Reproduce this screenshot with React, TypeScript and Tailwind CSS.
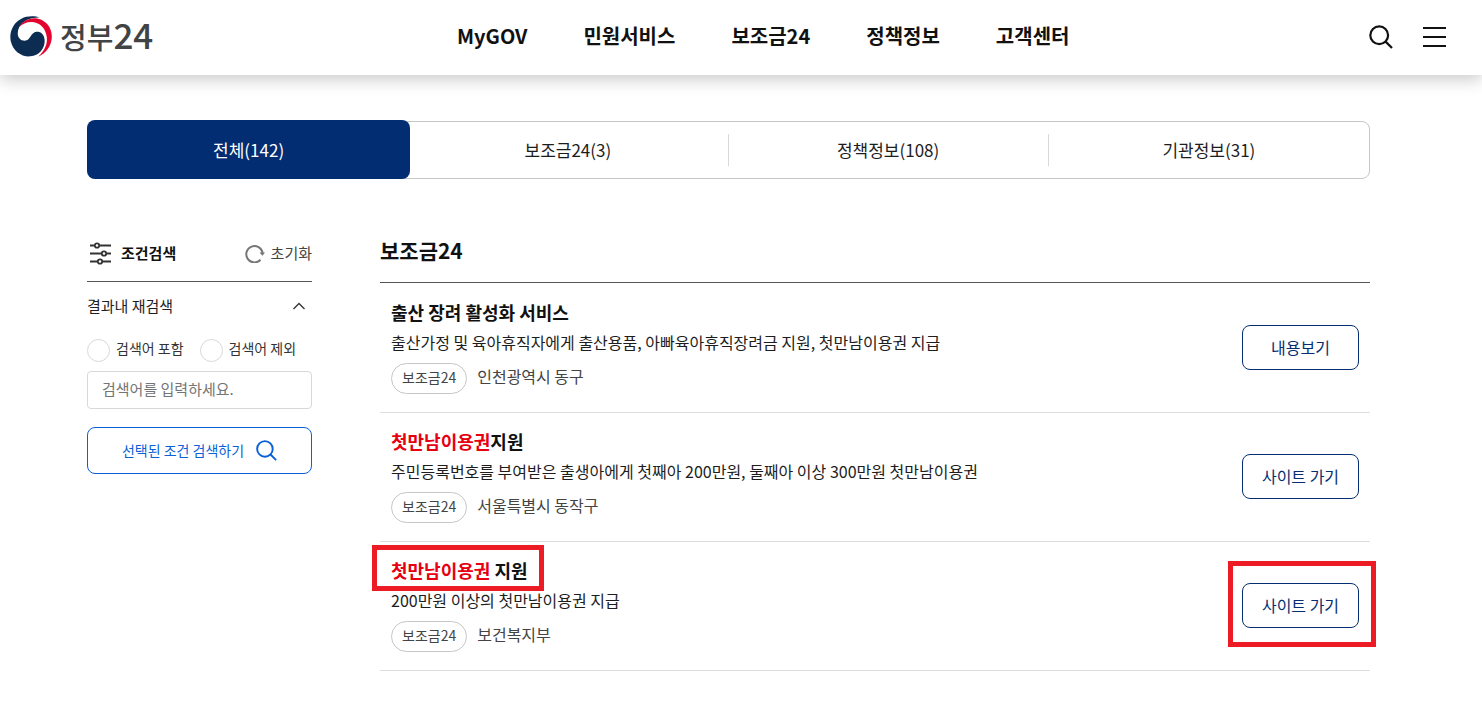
import React, { useState } from 'react';

interface ResultItem {
  id: number;
  keyword?: string;
  title: string;
  description: string;
  agency: string;
  action: string;
  marked?: boolean;
}

const NAV_ITEMS = ['MyGOV', '민원서비스', '보조금24', '정책정보', '고객센터'];

const TABS = [
  { label: '전체', count: 142 },
  { label: '보조금24', count: 3 },
  { label: '정책정보', count: 108 },
  { label: '기관정보', count: 31 },
];

const RESULTS: ResultItem[] = [
  {
    id: 1,
    title: '출산 장려 활성화 서비스',
    description: '출산가정 및 육아휴직자에게 출산용품, 아빠육아휴직장려금 지원, 첫만남이용권 지급',
    agency: '인천광역시 동구',
    action: '내용보기',
  },
  {
    id: 2,
    keyword: '첫만남이용권',
    title: '지원',
    description: '주민등록번호를 부여받은 출생아에게 첫째아 200만원, 둘째아 이상 300만원 첫만남이용권',
    agency: '서울특별시 동작구',
    action: '사이트 가기',
  },
  {
    id: 3,
    keyword: '첫만남이용권',
    title: ' 지원',
    description: '200만원 이상의 첫만남이용권 지급',
    agency: '보건복지부',
    action: '사이트 가기',
    marked: true,
  },
];

const SearchIcon = ({ className }: { className: string }) => (
  <svg viewBox="0 0 24 24" fill="none" stroke="currentColor" strokeWidth="2.2" className={className} aria-hidden="true">
    <circle cx="10.2" cy="10.2" r="8.9" />
    <path d="M16.600 16.600 23 23" />
  </svg>
);

const GovMark = () => (
  <svg viewBox="0 0 126 124" className="h-[41px] w-[42px]" aria-hidden="true">
    <path
      fill="#0c2c52"
      d="M90 5C75-1 50-1 34 8C8 21-4 50 2 77C9 106 34 124 61 122C90 120 107 96 104 70C102 55 92 47 80 48C61 50 62 75 44 75C30 75 22 64 23 51C25 26 44 12 66 7C75 5 82 4 90 5Z"
    />
    <path
      fill="#e4032e"
      d="M27 34C37 15 61 3 84 8C108 13 126 34 126 62C126 89 109 113 84 123C103 107 113 87 111 65C108 38 91 20 67 18C51 17 37 23 27 34Z"
    />
  </svg>
);

const Header = () => (
  <header className="relative flex h-[75px] items-center bg-white pb-[2px] pl-[10px] pr-[35px] shadow-[0_4px_16px_rgba(0,0,0,0.22)]">
    <a href="#" className="flex w-[144px] shrink-0 items-center gap-2 text-[#414345]">
      <GovMark />
      <span className="flex items-baseline pb-1 font-medium whitespace-nowrap text-[29px] leading-10">
        정부<span className="text-[35px]">24</span>
      </span>
    </a>
    <nav className="ml-[303px] flex gap-14 pb-[2px]">
      {NAV_ITEMS.map((item) => (
        <a key={item} href="#" className="whitespace-nowrap text-xl leading-7 font-bold text-[#111]">
          {item}
        </a>
      ))}
    </nav>
    <div className="ml-auto flex items-center gap-[30px] text-[#111]">
      <button type="button" aria-label="검색">
        <SearchIcon className="size-6" />
      </button>
      <button type="button" aria-label="전체메뉴">
        <svg viewBox="0 0 24 24" stroke="currentColor" strokeWidth="2" className="size-6" aria-hidden="true">
          <path d="M0 3h23M0 12h23M0 21h23" />
        </svg>
      </button>
    </div>
  </header>
);

const ResultTabs = () => {
  const [active, setActive] = useState(0);

  return (
    <div className="grid h-[58px] grid-cols-4 rounded-lg border border-[#c6c6c6]">
      {TABS.map((tab, i) => (
        <button
          key={tab.label}
          type="button"
          onClick={() => setActive(i)}
          className={
            i === active
              ? '-mt-[2px] -mr-[2px] -mb-px -ml-px rounded-lg bg-[#032d72] text-[17px] text-white'
              : 'flex items-center text-[17px] text-[#1d1d1d]'
          }
        >
          {i === active ? (
            `${tab.label}(${tab.count})`
          ) : (
            <span
              className={
                i < TABS.length - 1
                  ? 'flex h-8 flex-1 items-center justify-center border-r border-[#d8d8d8]'
                  : 'flex h-8 flex-1 items-center justify-center'
              }
            >
              {tab.label}({tab.count})
            </span>
          )}
        </button>
      ))}
    </div>
  );
};

const FilterPanel = () => {
  const [mode, setMode] = useState('');

  return (
    <aside className="w-[225px] shrink-0">
      <div className="flex h-[57px] items-center justify-between border-b border-[#555]">
        <h2 className="flex items-center gap-2 pl-[2px] text-[15px] font-bold text-[#111]">
          <svg viewBox="0 0 24 24" fill="none" stroke="#333" strokeWidth="1.8" className="size-6" aria-hidden="true">
            <path d="M1 4.500h4.700M10.300 4.500H22M1 12.500h11.700M17.300 12.500H22M1 20.500h7.700M13.300 20.500h8.700" />
            <circle cx="8" cy="4.500" r="2.200" />
            <circle cx="15" cy="12.500" r="2.200" />
            <circle cx="11" cy="20.500" r="2.200" />
          </svg>
          조건검색
        </h2>
        <button type="button" className="flex items-center gap-[6px] text-[15px] text-[#444]">
          <svg viewBox="0 0 20 20" fill="none" stroke="#777" strokeWidth="2" className="size-5" aria-hidden="true">
            <path d="M15.500 16.800A8.200 8.200 0 1 1 17.600 10" />
            <path d="M14.500 9.400h5.500l-2.600 3.400z" fill="#777" stroke="none" />
          </svg>
          초기화
        </button>
      </div>

      <button type="button" className="flex h-12 w-full items-center justify-between pr-[7px] text-[15px] text-[#1d1d1d]">
        결과내 재검색
        <svg viewBox="0 0 12 8" fill="none" stroke="#333" strokeWidth="1.300" className="h-2 w-3" aria-hidden="true">
          <path d="M.5 7 6 1.500 11.500 7" />
        </svg>
      </button>

      <div className="mt-2 flex gap-4">
        {['검색어 포함', '검색어 제외'].map((label) => (
          <label key={label} className="flex items-center gap-[6px] whitespace-nowrap text-sm text-[#333]">
            <input
              type="radio"
              name="mode"
              checked={mode === label}
              onChange={() => setMode(label)}
              className="size-[23px] appearance-none rounded-full border border-[#d8d8d8] checked:border-[6px] checked:border-[#0b5fd7]"
            />
            <span className="pb-1">{label}</span>
          </label>
        ))}
      </div>

      <input
        type="text"
        aria-label="검색어"
        placeholder="검색어를 입력하세요."
        className="mt-[9px] block h-[38px] w-full rounded-sm border border-[#d8d8d8] px-[14px] pb-1 text-[15px] text-[#333] placeholder:text-[#757575]"
      />
      <button
        type="button"
        className="mt-[18px] flex h-[47px] w-full items-center justify-center gap-3 rounded-lg border border-[#0b5fd7] text-sm text-[#0b5fd7]"
      >
        <span className="pb-[2px]">선택된 조건 검색하기</span>
        <SearchIcon className="size-[21px]" />
      </button>
    </aside>
  );
};

const ResultRow = ({ item }: { item: ResultItem }) => (
  <li className="flex items-center justify-between border-b border-[#dedede] px-[11px] pt-4 pb-[18px]">
    <div>
      <h3 className="text-lg leading-6 font-bold text-[#111]">
        <a href="#" className="relative inline-block whitespace-pre">
          {item.keyword && <span className="text-[#e60012]">{item.keyword}</span>}
          {item.title}
          {item.marked && (
            <span className="absolute -top-[13px] -right-4 -bottom-[9px] -left-[19px] border-5 border-[#ed1c24]" />
          )}
        </a>
      </h3>
      <p className="mt-[6px] text-base leading-6 text-[#1d1d1d]">{item.description}</p>
      <div className="mt-[9px] flex items-center gap-[10px]">
        <span className="flex h-[31px] items-center rounded-full border border-[#c6c6c6] px-[10px] pb-[3px] text-sm text-[#444]">
          보조금24
        </span>
        <span className="pb-[5px] text-base leading-6 text-[#444]">{item.agency}</span>
      </div>
    </div>
    <button
      type="button"
      className="relative h-[45px] w-[117px] shrink-0 rounded-lg border border-[#052e70] text-base text-[#052e70]"
    >
      {item.action}
      {item.marked && (
        <span className="absolute -top-[23px] -right-[18px] -bottom-5 -left-[15px] border-5 border-[#ed1c24]" />
      )}
    </button>
  </li>
);

export default function App() {
  return (
    <div className="bg-white font-['Noto_Sans_CJK_KR',sans-serif]">
      <Header />
      <div className="pt-[46px] pr-[112px] pb-9 pl-[87px]">
        <ResultTabs />
        <div className="mt-[46px] flex gap-[68px]">
          <FilterPanel />
          <main className="min-w-0 flex-1">
            <h2 className="flex h-[58px] items-center border-b border-[#555] pb-[6px] text-[21px] font-bold text-[#111]">
              보조금24
            </h2>
            <ul className="pt-px">
              {RESULTS.map((item) => (
                <ResultRow key={item.id} item={item} />
              ))}
            </ul>
          </main>
        </div>
      </div>
    </div>
  );
}
